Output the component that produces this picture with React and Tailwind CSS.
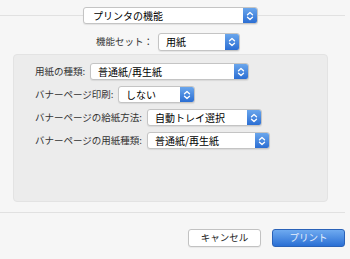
import React from 'react';

const font = { fontFamily: '"Noto Sans CJK JP", "Hiragino Sans", sans-serif' };

function Chevrons() {
  return (
    <svg width="8" height="10" viewBox="0 0 8 10" fill="none" stroke="white" strokeWidth="1.3" strokeLinecap="round" strokeLinejoin="round">
      <path d="M1.5 3.8 L4 1.5 L6.5 3.8" />
      <path d="M1.5 6.2 L4 8.5 L6.5 6.2" />
    </svg>
  );
}

function Popup({ label, className = '', pad = 'pl-[7px]' }) {
  return (
    <div className={`flex items-stretch bg-white border border-[#c4c4c4] rounded-[3px] shadow-[0_1px_1px_rgba(0,0,0,0.08)] overflow-hidden ${className}`}>
      <div className={`flex-1 flex items-center ${pad} text-[10px] text-black leading-none whitespace-nowrap`}>{label}</div>
      <div className="w-[14px] flex items-center justify-center bg-gradient-to-b from-[#6aa6ec] to-[#2b6ed3]">
        <Chevrons />
      </div>
    </div>
  );
}

function Row({ label, labelW, popup, popupW }) {
  return (
    <div className="flex items-center h-[17px]">
      <div className={`${labelW} text-[9.5px] text-[#333] leading-none whitespace-nowrap`}>{label}</div>
      <Popup label={popup} className={`${popupW} h-[17px]`} />
    </div>
  );
}

export default function App() {
  return (
    <div className="w-[350px] h-[259px] bg-[#f6f6f6] overflow-hidden" style={font}>
      {/* header popup over the divider */}
      <div className="flex items-center pt-[7px] pr-[5px]">
        <div className="w-[83px] h-px bg-[#e1e1e1]" />
        <Popup label="プリンタの機能" pad="pl-[9px]" className="w-[175px] h-[17px]" />
        <div className="flex-1 h-px bg-[#e1e1e1]" />
      </div>

      <div className="flex items-center mt-[9px] pl-[96px] h-[18px]">
        <div className="w-[62px] text-[9.5px] text-[#333] leading-none whitespace-nowrap">機能セット：</div>
        <Popup label="用紙" className="w-[82px] h-[18px]" />
      </div>

      {/* settings panel */}
      <div className="mt-[3px] ml-[13px] w-[315px] h-[148px] bg-[#ececec] border border-[#e3e3e3] rounded-[4px] pt-[8px] pl-[21px] flex flex-col gap-[6px]">
        <Row label="用紙の種類:" labelW="w-[55px]" popup="普通紙/再生紙" popupW="w-[159px]" />
        <Row label="バナーページ印刷:" labelW="w-[83px]" popup="しない" popupW="w-[77px]" />
        <Row label="バナーページの給紙方法:" labelW="w-[112px]" popup="自動トレイ選択" popupW="w-[115px]" />
        <Row label="バナーページの用紙種類:" labelW="w-[112px]" popup="普通紙/再生紙" popupW="w-[123px]" />
      </div>

      <div className="mt-[10px] w-[345px] h-px bg-[#e1e1e1]" />

      <div className="flex justify-end gap-[11px] mt-[16px] pr-[5px]">
        <button className="w-[73px] h-[18px] bg-white border border-[#c2c2c2] rounded-[3px] shadow-[0_1px_1px_rgba(0,0,0,0.06)] text-[9.5px] text-[#222] leading-none">
          キャンセル
        </button>
        <button className="w-[73px] h-[18px] bg-gradient-to-b from-[#6eaaf0] to-[#2a6fd4] border border-[#2a62b8] rounded-[3px] text-[9.5px] text-[#e6effc] leading-none">
          プリント
        </button>
      </div>
    </div>
  );
}
